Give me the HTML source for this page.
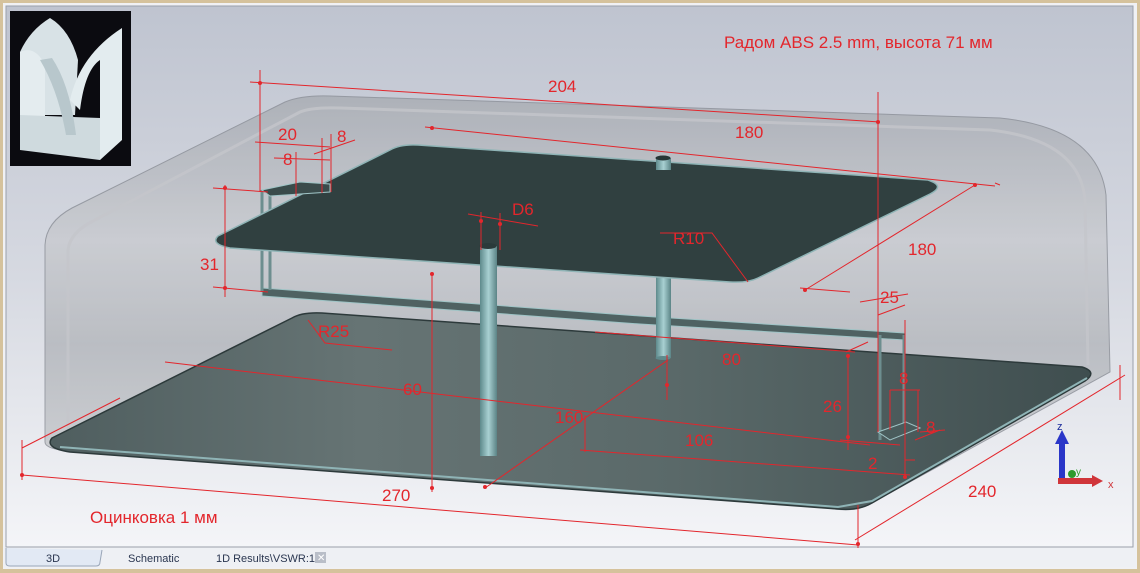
<!DOCTYPE html>
<html><head><meta charset="utf-8"><style>
html,body{margin:0;padding:0;width:1140px;height:573px;overflow:hidden;background:#d9c7a3}
svg{display:block}
text{font-family:"Liberation Sans","DejaVu Sans",sans-serif}
</style></head><body>
<svg width="1140" height="573" viewBox="0 0 1140 573" xmlns="http://www.w3.org/2000/svg">
<defs>
<linearGradient id="bg" x1="0" y1="0" x2="0" y2="1">
<stop offset="0" stop-color="#bfc4d0"/><stop offset="0.5" stop-color="#d6d9e1"/><stop offset="1" stop-color="#f4f5f8"/></linearGradient>
<linearGradient id="dome" x1="0" y1="0" x2="0" y2="1">
<stop offset="0" stop-color="#a9adb4"/><stop offset="0.35" stop-color="#c9cbd0"/><stop offset="0.6" stop-color="#b5b8bd"/><stop offset="1" stop-color="#cfd1d5"/></linearGradient>
<linearGradient id="plate" x1="0" y1="0" x2="1" y2="0">
<stop offset="0" stop-color="#4f5e5f"/><stop offset="0.3" stop-color="#667474"/><stop offset="0.6" stop-color="#5a6969"/><stop offset="1" stop-color="#3f4e4f"/></linearGradient>
<linearGradient id="post" x1="0" y1="0" x2="1" y2="0">
<stop offset="0" stop-color="#5e8a8c"/><stop offset="0.5" stop-color="#a8d0d2"/><stop offset="1" stop-color="#5b8486"/></linearGradient>
</defs>
<rect x="0" y="0" width="1140" height="573" fill="#d5c29c"/>
<rect x="3" y="3" width="1134" height="566" fill="#f0f1f4"/>
<rect x="6" y="6" width="1127" height="541" fill="url(#bg)" stroke="#9aa0aa" stroke-width="1"/>
<path d="M45,442 L45,245 Q46,222 72,208 L285,102 Q302,95 330,96 L1000,118 Q1098,128 1106,195 L1110,372 L868,505 Q850,514 820,506 L62,450 Q45,448 45,442Z" fill="url(#dome)" opacity="0.85" stroke="#8d9199" stroke-width="1"/>
<path d="M68,440 L68,250 Q70,232 95,220 L300,112 Q312,107 340,108 L990,130 Q1080,140 1085,200 L1088,365" fill="none" stroke="#c4c6cb" stroke-width="3" opacity="0.8"/>
<path d="M52,438 L292,318 Q302,312 322,313 L1082,367 Q1098,372 1085,381 L872,503 Q858,511 838,509 L70,452 Q44,448 52,438Z" fill="url(#plate)" stroke="#2d3a3b" stroke-width="1.5"/>
<path d="M60,447 L838,507 L872,501 L1087,378" fill="none" stroke="#8fb4b6" stroke-width="2"/>
<path d="M262,288 L640,316 L905,333 L905,340 L640,324 L262,296Z" fill="#4f6262" stroke="#9fc4c6" stroke-width="1"/>
<path d="M262,190 L262,292 M270,190 L270,290" stroke="#6d8e8f" stroke-width="3"/>
<path d="M880,335 L880,440 M904,335 L904,430" stroke="#6d8e8f" stroke-width="3"/>
<path d="M878,432 L906,422 L920,428 L890,440Z" fill="#4a5c5c" stroke="#9fc4c6"/>
<rect x="656" y="270" width="15" height="88" fill="url(#post)"/>
<ellipse cx="663" cy="358" rx="7.5" ry="2" fill="#5f8a8c"/>
<path d="M218,236 L390,150 Q400,144 418,145 L928,180 Q946,186 930,194 L758,278 Q748,283 730,282 L230,248 Q210,244 218,236Z" fill="#304040" stroke="#8fb4b6" stroke-width="1.5"/>
<path d="M262,190 L300,182 L330,184 L330,192 L270,196Z" fill="#3a4b4b" stroke="#9fc4c6"/>
<rect x="656" y="158" width="15" height="12" fill="url(#post)"/>
<ellipse cx="663" cy="158" rx="7.5" ry="2.5" fill="#263535"/>
<rect x="480" y="246" width="17" height="210" fill="url(#post)"/>
<ellipse cx="488" cy="246" rx="8.5" ry="3" fill="#2a3a3a"/>
<g stroke="#e3262c" stroke-width="1" fill="none">
<path d="M250,82 L880,122 M260,70 L260,192 M878,92 L878,432"/>
<path d="M425,127 L995,186 M975,185 L805,290 M995,183 L1000,185"/>
<path d="M255,142 L330,147 M322,138 L322,193 M331,134 L331,192 M314,154 L355,140 M274,158 L330,160 M296,152 L296,196"/>
<path d="M225,185 L225,297 M213,188 L268,192 M213,287 L268,292"/>
<path d="M468,214 L538,226 M481,212 L481,250 M500,213 L500,250"/>
<path d="M660,233 L712,233 L748,282"/>
<path d="M800,288 L850,292"/>
<path d="M308,320 L325,343 L392,350"/>
<path d="M432,272 L432,492 M165,362 L870,445"/>
<path d="M595,332 L855,352 M860,302 L908,294 M878,315 L905,305 M905,320 L905,478 M848,355 L848,450 M846,352 L868,342"/>
<path d="M485,488 L668,360 M667,355 L667,400 M585,415 L585,452 M580,450 L910,475 M840,440 L900,445"/>
<path d="M890,390 L920,390 M890,390 L890,430 M918,390 L918,432 M905,460 L915,460 M915,440 L940,430 M920,432 L945,430"/>
<path d="M22,440 L22,480 M22,475 L858,545 M858,505 L858,548 M855,540 L1125,375 M1120,365 L1120,400"/>
<path d="M22,448 L120,398"/>
</g>
<g fill="#e3262c">
<circle cx="260" cy="83" r="2"/><circle cx="878" cy="122" r="2"/><circle cx="432" cy="128" r="2"/><circle cx="975" cy="185" r="2"/><circle cx="805" cy="290" r="2"/>
<circle cx="225" cy="188" r="2"/><circle cx="225" cy="288" r="2"/><circle cx="481" cy="221" r="2"/><circle cx="500" cy="224" r="2"/>
<circle cx="432" cy="274" r="2"/><circle cx="432" cy="488" r="2"/><circle cx="485" cy="487" r="2"/><circle cx="667" cy="385" r="2"/>
<circle cx="22" cy="475" r="2"/><circle cx="858" cy="544" r="2"/><circle cx="848" cy="356" r="2"/><circle cx="848" cy="437" r="2"/><circle cx="905" cy="477" r="2"/>
</g>
<g fill="#e3262c" font-size="17">
<text x="724" y="48">Радом ABS 2.5 mm, высота 71 мм</text>
<text x="548" y="92">204</text>
<text x="735" y="138">180</text>
<text x="278" y="140">20</text>
<text x="337" y="142">8</text>
<text x="283" y="165">8</text>
<text x="512" y="215">D6</text>
<text x="673" y="244">R10</text>
<text x="908" y="255">180</text>
<text x="200" y="270">31</text>
<text x="318" y="337">R25</text>
<text x="880" y="303">25</text>
<text x="722" y="365">80</text>
<text x="403" y="395">60</text>
<text x="899" y="384">8</text>
<text x="823" y="412">26</text>
<text x="555" y="423">160</text>
<text x="685" y="446">106</text>
<text x="926" y="433">8</text>
<text x="868" y="469">2</text>
<text x="382" y="501">270</text>
<text x="968" y="497">240</text>
<text x="90" y="523">Оцинковка 1 мм</text>
</g>
<rect x="1059" y="442" width="6" height="36" fill="#2a36c8"/>
<path d="M1055,444 L1062,430 L1069,444Z" fill="#2a36c8"/>
<rect x="1058" y="478" width="37" height="6" fill="#d0353a"/>
<path d="M1092,475 L1103,481 L1092,487Z" fill="#d0353a"/>
<circle cx="1072" cy="474" r="4" fill="#2c9a2c"/>
<text x="1057" y="430" font-size="11" fill="#1a2a9a">z</text>
<text x="1076" y="475" font-size="10" fill="#2c9a2c">y</text>
<text x="1108" y="488" font-size="11" fill="#d0353a">x</text>
<rect x="10" y="11" width="121" height="155" fill="#0b0b10"/>
<path d="M20,52 Q30,30 50,18 Q70,30 78,60 L75,115 L20,115Z" fill="#d8e2e6"/>
<path d="M20,52 Q35,45 45,65 L45,150 L20,148Z" fill="#e4ecef"/>
<path d="M70,100 Q80,55 122,28 L122,140 L100,160 L100,60 Q85,70 80,110Z" fill="#e3ecef"/>
<path d="M20,115 L100,118 L100,160 L20,150Z" fill="#cfdade"/>
<path d="M40,60 Q58,90 66,135 L76,135 Q70,85 52,58Z" fill="#b8c7cc"/>
<rect x="4" y="548" width="1132" height="19" fill="#eef0f4"/>
<path d="M6,548 L6,563 Q6,566 10,566 L96,566 Q100,566 100,562 L102,550" fill="#e2e9f4" stroke="#9aa6b8"/>
<g font-size="11" fill="#2a3650">
<text x="46" y="562">3D</text>
<text x="128" y="562">Schematic</text>
<text x="216" y="562">1D Results\VSWR:1</text>
</g>
<rect x="315" y="552" width="11" height="11" fill="#b9bec8"/>
<text x="317" y="561" font-size="10" fill="#fff">✕</text>
</svg>
</body></html>
